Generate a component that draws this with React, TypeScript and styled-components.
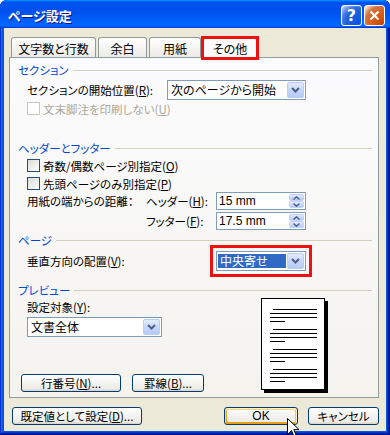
import React from "react";
import styled, { createGlobalStyle, css } from "styled-components";

const GlobalStyle = createGlobalStyle`
  html, body { margin: 0; padding: 0; background: #ffffff; }
  body {
    font-family: "Noto Sans CJK JP", "Noto Sans", sans-serif;
    font-size: 11.5px;
    color: #000;
    font-feature-settings: "palt";
  }
  * { box-sizing: border-box; }
  u { text-underline-offset: 1px; }
`;

const Window = styled.div`
  position: relative;
  width: 390px;
  height: 435px;
  display: flex;
  flex-direction: column;
  background: #0855dd;
  border-radius: 7px 7px 0 0;
  overflow: hidden;
  box-shadow: inset -1px -1px #00138c, inset 1px 1px #0831d9,
    inset -2px -2px #001ea0, inset 2px 2px #166aee, inset -3px -3px #003bda,
    inset 3px 3px #0855dd;
`;

const TitleBar = styled.div`
  flex: none;
  height: 28px;
  display: flex;
  align-items: center;
  padding: 3px 5px 0 8px;
  background: linear-gradient(
    180deg,
    #0997ff,
    #0053ee 8%,
    #0050ee 40%,
    #06f 88%,
    #06f 93%,
    #005bff 95%,
    #003dd7 96%,
    #003dd7
  );
`;

const Title = styled.span`
  flex: 1;
  color: #fff;
  font-weight: bold;
  font-size: 13px;
  text-shadow: 1px 1px #0f1089;
`;

const CaptionButton = styled.div<{ $variant: "help" | "close" }>`
  width: 21px;
  height: 21px;
  border: 1px solid #fff;
  border-radius: 3px;
  display: flex;
  align-items: center;
  justify-content: center;
  color: #fff;
  font: bold 16px "DejaVu Sans", sans-serif;
  background: ${(p) =>
    p.$variant === "close"
      ? "radial-gradient(circle at 90% 90%, #cc4600 0%, #dc6527 55%, #cd7546 70%, #ffccb2 90%, #fff 100%)"
      : "radial-gradient(circle at 90% 90%, #0054e9 0%, #2263d5 55%, #4479e4 70%, #a3bbec 90%, #fff 100%)"};
  & + & {
    margin-left: 2px;
  }
`;

const Body = styled.div`
  flex: 1;
  margin: 0 4px 4px;
  background: #ece9d8;
  display: flex;
  flex-direction: column;
`;

const TabRow = styled.div`
  flex: none;
  height: 29px;
  display: flex;
  align-items: flex-end;
  padding-left: 7px;
`;

const Tab = styled.div<{ $w: number; $selected?: boolean; $marked?: boolean }>`
  position: relative;
  width: ${(p) => p.$w}px;
  height: 20px;
  margin-right: 2px;
  display: flex;
  align-items: center;
  justify-content: center;
  padding-top: 1px;
  font-size: 12px;
  border: 1px solid #919b9c;
  border-bottom: none;
  border-radius: 3px 3px 0 0;
  background: linear-gradient(#ffffff, #ecebe6);
  ${(p) =>
    p.$selected &&
    css`
      height: 22px;
      margin-bottom: -1px;
      z-index: 1;
      background: #fcfcfe;
      border-top-color: #e68b2c;
      box-shadow: inset 0 2px #ffc83c;
    `}
  ${(p) =>
    p.$marked &&
    css`
      &::after {
        content: "";
        position: absolute;
        left: -3px;
        right: -3px;
        top: -1px;
        bottom: -2px;
        border: 3px solid #ee1111;
      }
    `}
`;

const Panel = styled.div`
  flex: none;
  margin-left: 5px;
  width: 370px;
  height: 341px;
  border: 1px solid #919b9c;
  background: linear-gradient(#fcfcfe, #f4f3ee);
  padding: 0 6px 0 8px;
  display: flex;
  flex-direction: column;
`;

const GroupHeader = styled.div<{ $mt: number }>`
  margin-top: ${(p) => p.$mt}px;
  height: 14px;
  display: flex;
  align-items: center;
  gap: 4px;
  color: #0046d5;
  line-height: 14px;
  white-space: nowrap;
  &::after {
    content: "";
    flex: 1;
    height: 1px;
    background: #d0d0bf;
  }
`;

const Row = styled.div<{ $mt: number; $h: number }>`
  margin-top: ${(p) => p.$mt}px;
  height: ${(p) => p.$h}px;
  display: flex;
  align-items: center;
  padding-left: 9px;
  white-space: nowrap;
`;

const FieldLabel = styled.span<{ $w?: number }>`
  flex: none;
  width: ${(p) => (p.$w ? `${p.$w}px` : "auto")};
  line-height: 14px;
  white-space: nowrap;
`;

const SpinGrid = styled.div<{ $mt: number }>`
  margin-top: ${(p) => p.$mt}px;
  height: 18px;
  display: grid;
  grid-template-columns: 119px 70px 90px;
  align-items: center;
  padding-left: 9px;
  white-space: nowrap;
`;

const ComboBox = styled.div<{ $w: number; $marked?: boolean }>`
  position: relative;
  flex: none;
  width: ${(p) => p.$w}px;
  height: 20px;
  border: 1px solid #7f9db9;
  background: #fff;
  display: flex;
  align-items: center;
  padding: 1px;
  ${(p) =>
    p.$marked &&
    css`
      outline: 3px solid #ee1111;
      outline-offset: 3px;
    `}
`;

const ComboText = styled.span<{ $selected?: boolean }>`
  flex: 1;
  align-self: stretch;
  margin: ${(p) => (p.$selected ? "1px 1px 1px 0" : "0")};
  padding-left: 2px;
  display: flex;
  align-items: center;
  line-height: 14px;
  font-size: 12px;
  background: ${(p) => (p.$selected ? "#316ac5" : "transparent")};
  color: ${(p) => (p.$selected ? "#fff" : "#000")};
`;

const DropButton = styled.span`
  flex: none;
  width: 17px;
  align-self: stretch;
  border: 1px solid #bacdf5;
  border-radius: 2px;
  background: linear-gradient(180deg, #e3ecff 0%, #c9d8fc 45%, #b7caf5 100%);
  display: flex;
  align-items: center;
  justify-content: center;
`;

const SpinBox = styled.div`
  flex: none;
  width: 90px;
  height: 18px;
  border: 1px solid #7f9db9;
  background: #fff;
  display: flex;
  padding: 1px;
`;

const SpinText = styled.span`
  flex: 1;
  padding-left: 1px;
  display: flex;
  align-items: center;
  line-height: 14px;
  font-family: "Liberation Sans", Arial, sans-serif;
  font-size: 12px;
`;

const SpinButtons = styled.span`
  flex: none;
  width: 15px;
  display: flex;
  flex-direction: column;
`;

const SpinArrow = styled.span`
  flex: 1;
  border: 1px solid #c3d2f5;
  border-radius: 2px;
  background: linear-gradient(180deg, #e3ecff 0%, #c9d8fc 55%, #b7caf5 100%);
  display: flex;
  align-items: center;
  justify-content: center;
`;

const CheckBox = styled.span<{ $disabled?: boolean }>`
  flex: none;
  width: 13px;
  height: 13px;
  margin-right: 3px;
  border: 1px solid ${(p) => (p.$disabled ? "#cac8bb" : "#1c5180")};
  background: ${(p) =>
    p.$disabled ? "#ffffff" : "linear-gradient(135deg, #dcdcd7, #ffffff)"};
`;

const CheckText = styled.span<{ $disabled?: boolean }>`
  line-height: 14px;
  color: ${(p) => (p.$disabled ? "#aca899" : "#000")};
`;

const PreviewBody = styled.div`
  display: flex;
  align-items: flex-start;
`;

const PreviewLeft = styled.div`
  flex: none;
  width: 243px;
  display: flex;
  flex-direction: column;
`;

const PreviewLabel = styled.span`
  margin: 4px 0 0 9px;
  height: 12px;
  line-height: 12px;
`;

const ComboSlot = styled.div`
  margin: 4px 0 0 9px;
`;

const ButtonRow = styled.div<{ $mt: number; $pl: number; $pr?: number; $gap: number }>`
  margin-top: ${(p) => p.$mt}px;
  padding-left: ${(p) => p.$pl}px;
  padding-right: ${(p) => p.$pr ?? 0}px;
  display: flex;
  gap: ${(p) => p.$gap}px;
`;

const Spacer = styled.div<{ $w?: number }>`
  flex: ${(p) => (p.$w ? "none" : "1")};
  width: ${(p) => (p.$w ? `${p.$w}px` : "auto")};
`;

const Button = styled.div<{ $w: number; $hover?: boolean }>`
  flex: none;
  width: ${(p) => p.$w}px;
  height: 18px;
  border: 1px solid #003c74;
  border-radius: 3px;
  background: linear-gradient(180deg, #ffffff, #ecebe6 86%, #d6d0c5);
  display: flex;
  align-items: center;
  justify-content: center;
  line-height: 14px;
  white-space: nowrap;
  ${(p) =>
    p.$hover &&
    css`
      box-shadow: inset -1px 1px #fff0cf, inset 1px 2px #fdd889,
        inset -2px 2px #fbc761, inset 2px -2px #e5a01a;
    `}
`;

const OkLabel = styled.span`
  font-family: "Liberation Sans", Arial, sans-serif;
  font-size: 12px;
`;

const Page = styled.div`
  flex: none;
  margin-top: 1px;
  width: 64px;
  height: 92px;
  border: 1px solid #000;
  background: #fff;
  box-shadow: 3px 3px 0 #000;
`;

const Cursor = styled.svg`
  position: absolute;
  left: 287px;
  top: 418px;
`;

const Chevron = ({ down = true, small = false }: { down?: boolean; small?: boolean }) =>
  small ? (
    <svg width="7" height="4" viewBox="0 0 7 4">
      <polyline
        points={down ? "0.5,0.5 3.5,3.2 6.5,0.5" : "0.5,3.5 3.5,0.8 6.5,3.5"}
        fill="none"
        stroke="#4d6185"
        strokeWidth="1.4"
      />
    </svg>
  ) : (
    <svg width="9" height="6" viewBox="0 0 9 6">
      <polyline points="1,1 4.5,4.5 8,1" fill="none" stroke="#4d6185" strokeWidth="2" />
    </svg>
  );

const Combo = ({
  w,
  text,
  selected,
  marked,
}: {
  w: number;
  text: string;
  selected?: boolean;
  marked?: boolean;
}) => (
  <ComboBox $w={w} $marked={marked}>
    <ComboText $selected={selected}>{text}</ComboText>
    <DropButton>
      <Chevron />
    </DropButton>
  </ComboBox>
);

const Spin = ({ value }: { value: string }) => (
  <SpinBox>
    <SpinText>{value}</SpinText>
    <SpinButtons>
      <SpinArrow>
        <Chevron small down={false} />
      </SpinArrow>
      <SpinArrow>
        <Chevron small />
      </SpinArrow>
    </SpinButtons>
  </SpinBox>
);

const paragraphs = [10, 30, 50, 70];

const PagePreview = () => (
  <Page>
    <svg width="62" height="90" viewBox="0 0 62 90">
      {paragraphs.map((y) => (
        <g key={y} stroke="#000" strokeWidth="1">
          <line x1="11" y1={y + 0.5} x2="55" y2={y + 0.5} />
          <line x1="8" y1={y + 4.5} x2="55" y2={y + 4.5} />
          <line x1="8" y1={y + 8.5} x2="55" y2={y + 8.5} />
          <line x1="8" y1={y + 12.5} x2="23" y2={y + 12.5} />
        </g>
      ))}
    </svg>
  </Page>
);

export default function App() {
  return (
    <>
      <GlobalStyle />
      <Window>
        <TitleBar>
          <Title>ページ設定</Title>
          <CaptionButton $variant="help">?</CaptionButton>
          <CaptionButton $variant="close">
            <svg width="11" height="11" viewBox="0 0 11 11">
              <path d="M1.5 1.5 L9.5 9.5 M9.5 1.5 L1.5 9.5" stroke="#fff" strokeWidth="2.2" />
            </svg>
          </CaptionButton>
        </TitleBar>
        <Body>
          <TabRow>
            <Tab $w={85}>文字数と行数</Tab>
            <Tab $w={49}>余白</Tab>
            <Tab $w={52}>用紙</Tab>
            <Tab $w={54} $selected $marked>
              その他
            </Tab>
          </TabRow>
          <Panel>
            <GroupHeader $mt={5}>セクション</GroupHeader>
            <Row $mt={3} $h={20}>
              <FieldLabel $w={140}>
                セクションの開始位置(<u>R</u>):
              </FieldLabel>
              <Combo w={139} text="次のページから開始" />
            </Row>
            <Row $mt={2} $h={13}>
              <CheckBox $disabled />
              <CheckText $disabled>
                文末脚注を印刷しない(<u>U</u>)
              </CheckText>
            </Row>

            <GroupHeader $mt={26}>ヘッダーとフッター</GroupHeader>
            <Row $mt={3} $h={15}>
              <CheckBox />
              <CheckText>
                奇数/偶数ページ別指定(<u>O</u>)
              </CheckText>
            </Row>
            <Row $mt={3} $h={15}>
              <CheckBox />
              <CheckText>
                先頭ページのみ別指定(<u>P</u>)
              </CheckText>
            </Row>
            <SpinGrid $mt={1}>
              <FieldLabel>用紙の端からの距離：</FieldLabel>
              <FieldLabel>
                ヘッダー(<u>H</u>):
              </FieldLabel>
              <Spin value="15 mm" />
            </SpinGrid>
            <SpinGrid $mt={2}>
              <span />
              <FieldLabel>
                フッター(<u>F</u>):
              </FieldLabel>
              <Spin value="17.5 mm" />
            </SpinGrid>

            <GroupHeader $mt={3}>ページ</GroupHeader>
            <Row $mt={4} $h={20}>
              <FieldLabel $w={189}>
                垂直方向の配置(<u>V</u>):
              </FieldLabel>
              <Combo w={90} text="中央寄せ" selected marked />
            </Row>

            <GroupHeader $mt={12}>プレビュー</GroupHeader>
            <PreviewBody>
              <PreviewLeft>
                <PreviewLabel>
                  設定対象(<u>Y</u>):
                </PreviewLabel>
                <ComboSlot>
                  <Combo w={135} text="文書全体" />
                </ComboSlot>
                <ButtonRow $mt={37} $pl={3} $gap={11}>
                  <Button $w={100}>
                    行番号(<u>N</u>)...
                  </Button>
                  <Button $w={72}>
                    罫線(<u>B</u>)...
                  </Button>
                </ButtonRow>
              </PreviewLeft>
              <PagePreview />
            </PreviewBody>
          </Panel>
          <ButtonRow $mt={9} $pl={8} $pr={7} $gap={0}>
            <Button $w={130}>
              既定値として設定(<u>D</u>)...
            </Button>
            <Spacer />
            <Button $w={74} $hover>
              <OkLabel>OK</OkLabel>
            </Button>
            <Spacer $w={10} />
            <Button $w={71}>キャンセル</Button>
          </ButtonRow>
        </Body>
        <Cursor width="13" height="20" viewBox="0 0 13 20">
          <path
            d="M0.5 0.5 L0.5 16.5 L4.5 12.5 L7.2 18.8 L9.4 17.9 L6.8 11.6 L12 11.6 Z"
            fill="#fff"
            stroke="#000"
            strokeWidth="1"
            strokeLinejoin="miter"
          />
        </Cursor>
      </Window>
    </>
  );
}
